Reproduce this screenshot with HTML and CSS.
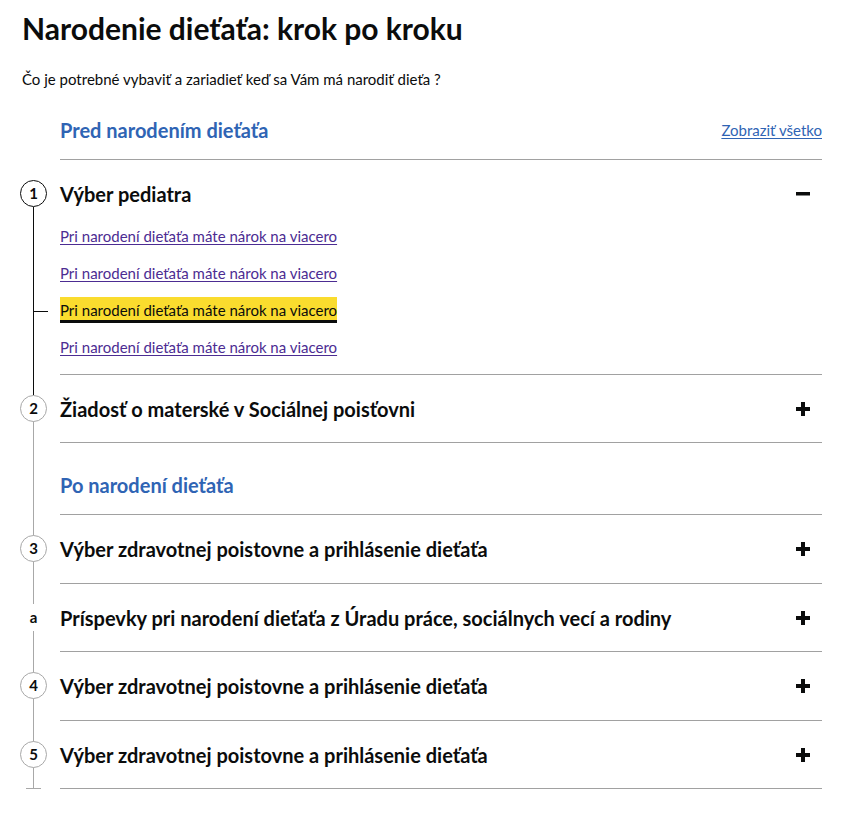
FILE: index.html
```html
<!DOCTYPE html>
<html lang="sk">
<head>
<meta charset="utf-8">
<title>Narodenie dieťaťa: krok po kroku</title>
<link rel="stylesheet" href="styles.css">
</head>
<body>
<main class="page">
  <h1 class="title">Narodenie dieťaťa: krok po kroku</h1>
  <p class="lead">Čo je potrebné vybaviť a zariadieť keď sa Vám má narodiť dieťa ?</p>

  <div class="stepnav">
    <div class="section-head">
      <h2 class="section-title">Pred narodením dieťaťa</h2>
      <a class="show-all" href="#">Zobraziť všetko</a>
    </div>

    <section class="step first active">
      <div class="step-header">
        <span class="step-num">1</span>
        <h3 class="step-title">Výber pediatra</h3>
        <svg class="step-icon" width="14" height="14" viewBox="0 0 14 14"><rect x="0" y="5" width="14" height="3.5" fill="#0b0c0c"/></svg>
      </div>
      <ul class="step-links">
        <li><a href="#">Pri narodení dieťaťa máte nárok na viacero</a></li>
        <li><a href="#">Pri narodení dieťaťa máte nárok na viacero</a></li>
        <li class="current"><a href="#">Pri narodení dieťaťa máte nárok na viacero</a></li>
        <li><a href="#">Pri narodení dieťaťa máte nárok na viacero</a></li>
      </ul>
    </section>

    <section class="step after-active">
      <div class="step-header">
        <span class="step-num">2</span>
        <h3 class="step-title">Žiadosť o materské v Sociálnej poisťovni</h3>
        <svg class="step-icon" width="14" height="14" viewBox="0 0 14 14"><rect x="0" y="5" width="14" height="4" fill="#0b0c0c"/><rect x="5" y="0" width="4" height="14" fill="#0b0c0c"/></svg>
      </div>
    </section>

    <div class="section-head mid">
      <h2 class="section-title">Po narodení dieťaťa</h2>
    </div>

    <section class="step">
      <div class="step-header">
        <span class="step-num">3</span>
        <h3 class="step-title">Výber zdravotnej poistovne a prihlásenie dieťaťa</h3>
        <svg class="step-icon" width="14" height="14" viewBox="0 0 14 14"><rect x="0" y="5" width="14" height="4" fill="#0b0c0c"/><rect x="5" y="0" width="4" height="14" fill="#0b0c0c"/></svg>
      </div>
    </section>

    <section class="step">
      <div class="step-header">
        <span class="step-num step-and">a</span>
        <h3 class="step-title">Príspevky pri narodení dieťaťa z Úradu práce, sociálnych vecí a rodiny</h3>
        <svg class="step-icon" width="14" height="14" viewBox="0 0 14 14"><rect x="0" y="5" width="14" height="4" fill="#0b0c0c"/><rect x="5" y="0" width="4" height="14" fill="#0b0c0c"/></svg>
      </div>
    </section>

    <section class="step">
      <div class="step-header">
        <span class="step-num">4</span>
        <h3 class="step-title">Výber zdravotnej poistovne a prihlásenie dieťaťa</h3>
        <svg class="step-icon" width="14" height="14" viewBox="0 0 14 14"><rect x="0" y="5" width="14" height="4" fill="#0b0c0c"/><rect x="5" y="0" width="4" height="14" fill="#0b0c0c"/></svg>
      </div>
    </section>

    <section class="step last">
      <div class="step-header">
        <span class="step-num">5</span>
        <h3 class="step-title">Výber zdravotnej poistovne a prihlásenie dieťaťa</h3>
        <svg class="step-icon" width="14" height="14" viewBox="0 0 14 14"><rect x="0" y="5" width="14" height="4" fill="#0b0c0c"/><rect x="5" y="0" width="4" height="14" fill="#0b0c0c"/></svg>
      </div>
    </section>
  </div>
</main>
</body>
</html>
```
FILE: styles.css
```css
* { box-sizing: border-box; }

html, body {
  margin: 0;
  padding: 0;
  background: #ffffff;
}

body {
  font-family: "Lato", "Noto Sans", sans-serif;
  color: #0b0c0c;
}

.page {
  padding: 10px 38px 0 22px;
}

.title {
  margin: 0;
  font-size: 30px;
  line-height: 36px;
  font-weight: 700;
}

.lead {
  margin: 23px 0 0;
  font-size: 15px;
  line-height: 20px;
}

.stepnav {
  margin-left: 38px;
}

.section-head {
  position: relative;
  display: flex;
  justify-content: space-between;
  align-items: center;
  padding: 29px 0 16.5px;
  border-bottom: 1px solid #a1a1a1;
}

.section-title {
  margin: 0;
  font-size: 20px;
  line-height: 24px;
  font-weight: 700;
  color: #2f64b4;
}

.show-all {
  font-size: 15px;
  line-height: 20px;
  color: #2f64b4;
  text-decoration: underline;
  text-underline-offset: 2px;
}

.section-head.mid {
  padding-top: 29.5px;
  padding-bottom: 17.5px;
}

.section-head.mid::before {
  content: "";
  position: absolute;
  left: -27px;
  top: 0;
  bottom: -1px;
  width: 1px;
  background: #a8a8a8;
}

.step {
  position: relative;
  border-bottom: 1px solid #a1a1a1;
}

.step::before {
  content: "";
  position: absolute;
  left: -27px;
  top: 0;
  bottom: -1px;
  width: 1px;
  background: #a8a8a8;
}

.step.first::before {
  top: 47px;
}

.step.active::before {
  background: #0b0c0c;
}

.step.after-active::after {
  content: "";
  position: absolute;
  left: -27px;
  top: 0;
  height: 20px;
  width: 1px;
  background: #0b0c0c;
}

.step.last::after {
  content: "";
  position: absolute;
  left: -34px;
  bottom: -1px;
  width: 15px;
  height: 1px;
  background: #a8a8a8;
}

.step-header {
  position: relative;
  display: flex;
  align-items: center;
  justify-content: space-between;
  padding: 22px 0 21.5px;
}

.step-num {
  position: absolute;
  left: -40px;
  top: 20px;
  z-index: 2;
  width: 27px;
  height: 27px;
  border: 1px solid #a8a8a8;
  border-radius: 50%;
  background: #ffffff;
  display: flex;
  align-items: center;
  justify-content: center;
  font-size: 15px;
  font-weight: 700;
  line-height: 1;
  color: #0b0c0c;
}

.step.active .step-num {
  border-color: #0b0c0c;
}

.step-num.step-and {
  border-color: transparent;
}

.step-title {
  margin: 0;
  font-size: 20px;
  line-height: 24px;
  font-weight: 700;
}

.step-icon {
  flex: none;
  margin-right: 12px;
}

.step.first .step-header {
  padding-bottom: 20px;
}

.step-links {
  list-style: none;
  margin: 0;
  padding: 0 0 17px;
}

.step-links li {
  position: relative;
  font-size: 15px;
  line-height: 20px;
  margin-bottom: 17px;
}

.step-links li:last-child {
  margin-bottom: 0;
}

.step-links a {
  color: #4c2c92;
  text-decoration: underline;
  text-underline-offset: 2px;
}

.step-links li.current a {
  display: inline-block;
  color: #0b0c0c;
  text-decoration: none;
  background: #fadc2e;
  box-shadow: 0 -3px 0 #fadc2e, 0 3px 0 #0b0c0c;
}

.step-links li.current::before {
  content: "";
  position: absolute;
  left: -27px;
  top: 11px;
  width: 15px;
  height: 1px;
  background: #0b0c0c;
}
```
